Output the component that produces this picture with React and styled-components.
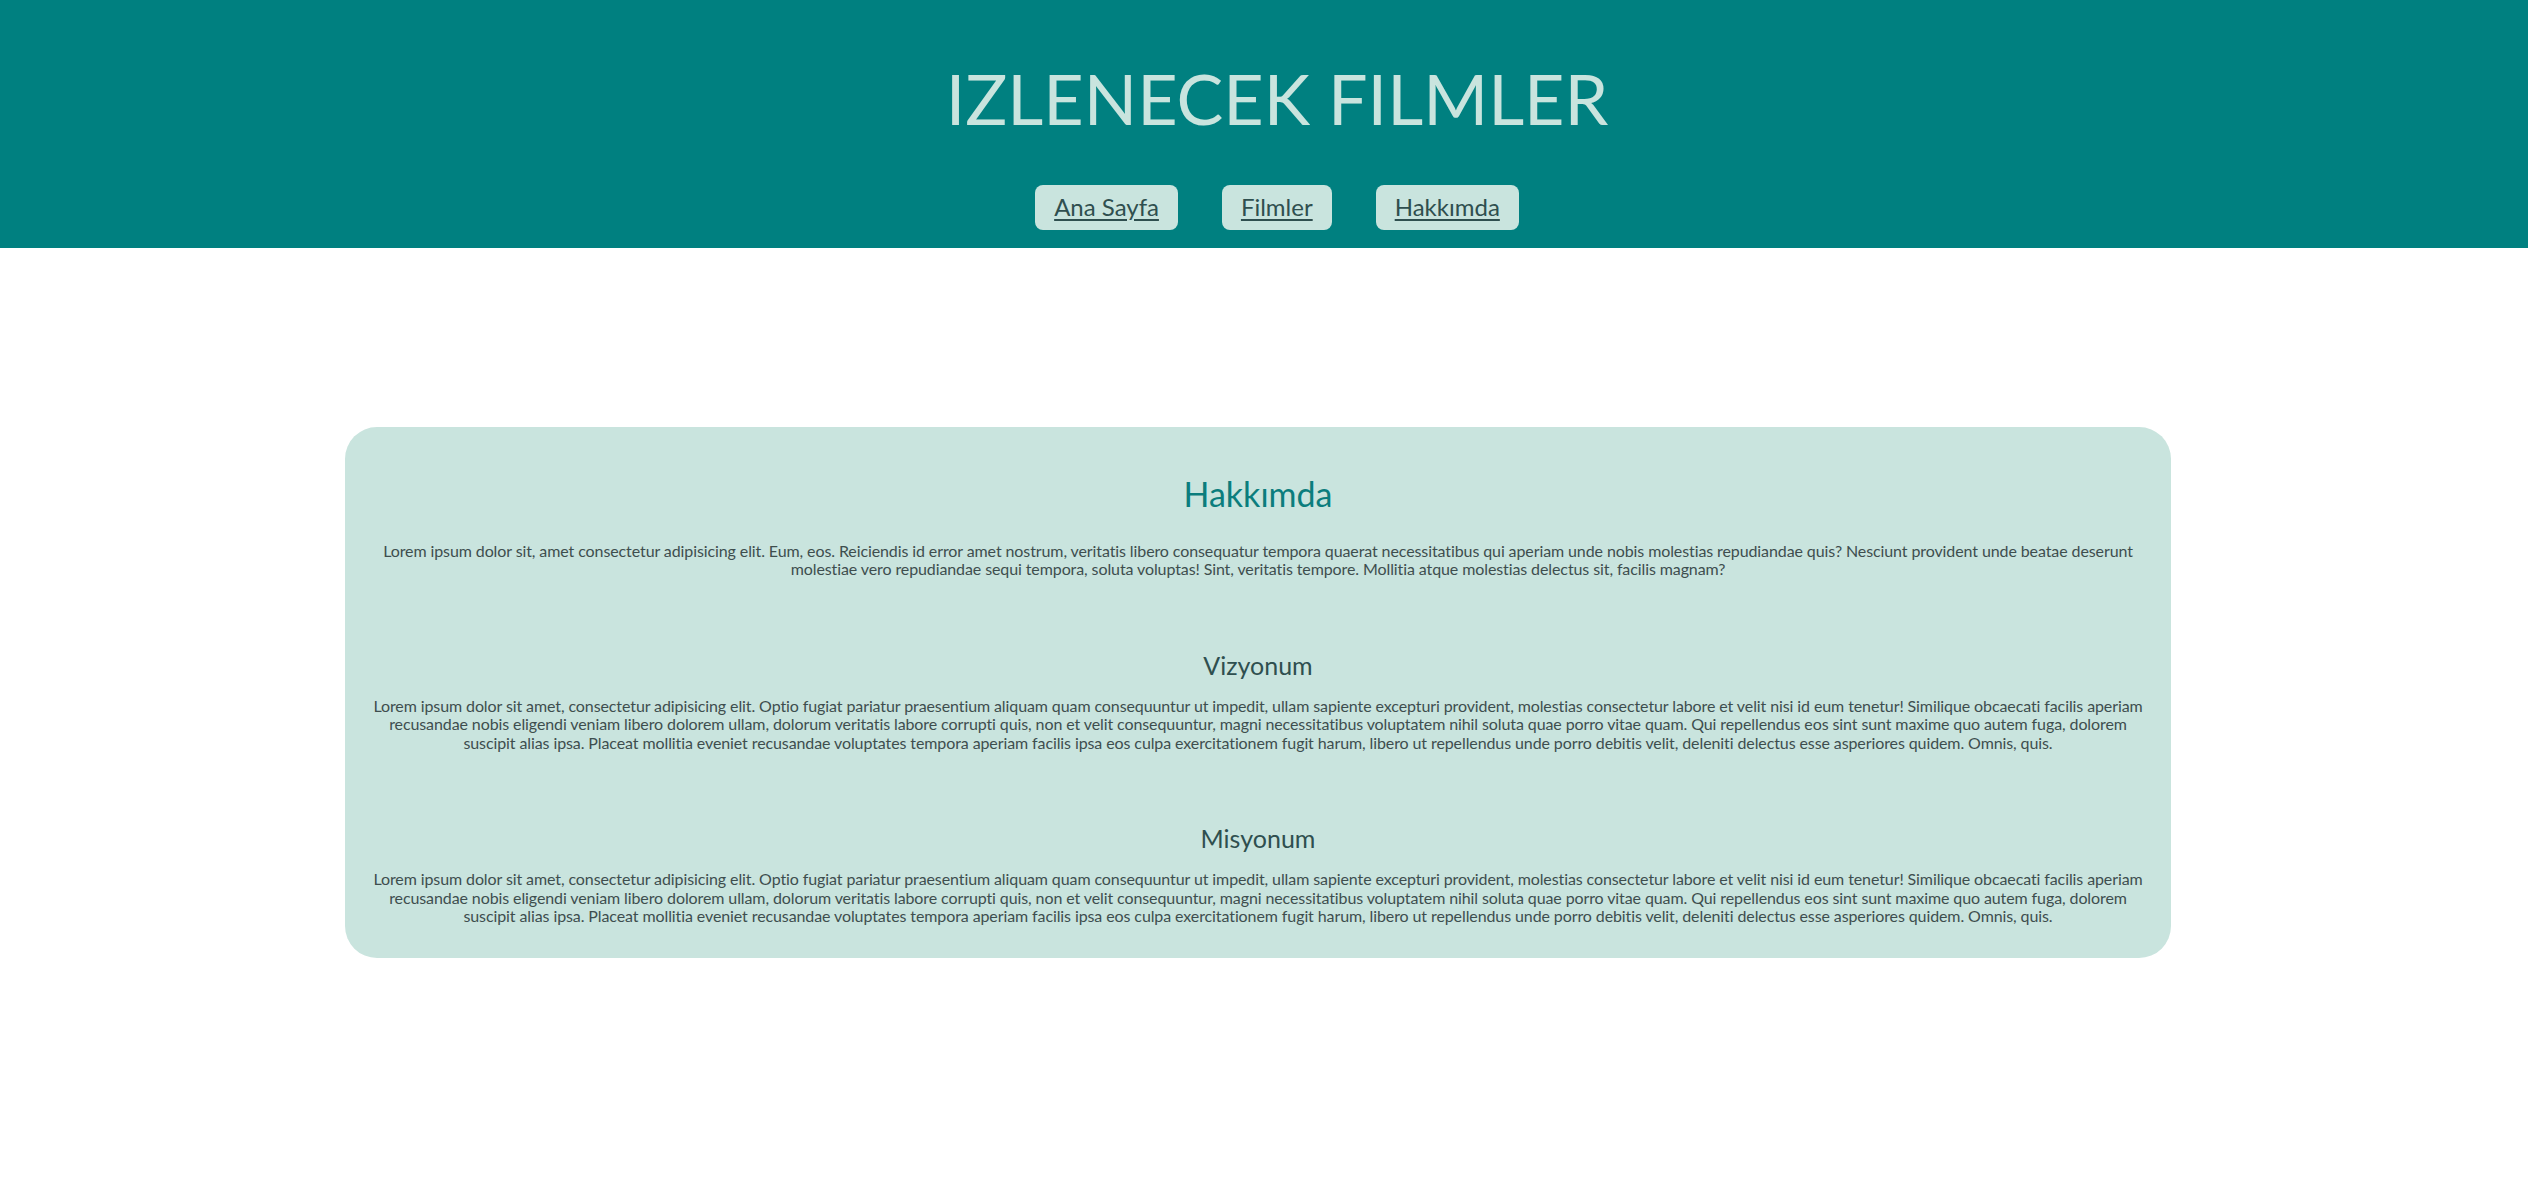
import React from 'react'
import styled, { createGlobalStyle } from 'styled-components'

const GlobalStyle = createGlobalStyle`
  body {
    margin: 0;
    background: #ffffff;
    font-family: Lato, "Noto Sans", sans-serif;
  }
`

const Header = styled.header`
  background: #008080;
  padding: 56px 0 18px 26px;
  display: flex;
  flex-direction: column;
  align-items: center;
`

const Title = styled.h1`
  margin: 0;
  font-size: 70px;
  font-weight: 400;
  line-height: 1.2;
  color: #c9e4de;
`

const Nav = styled.nav`
  display: flex;
  gap: 44px;
  margin-top: 45px;
`

const NavLink = styled.a`
  display: block;
  background: #c9e4de;
  color: #2f4f4f;
  font-size: 24px;
  line-height: 29px;
  padding: 7px 19px 9px;
  border-radius: 8px;
  text-decoration: underline;
  text-underline-offset: 3px;
  cursor: pointer;
`

const Main = styled.main`
  padding: 179px 357px 120px 345px;
`

const Card = styled.section`
  background: #c9e4de;
  border-radius: 32px;
  padding: 47px 18px 32px;
  text-align: center;
`

const PageTitle = styled.h2`
  margin: 0;
  font-size: 34px;
  font-weight: 400;
  line-height: 1.2;
  color: #0b7d7d;
`

const SubTitle = styled.h3`
  margin: 71px 0 0;
  font-size: 25px;
  font-weight: 400;
  line-height: 30px;
  color: #2f4f4f;
`

const Text = styled.p`
  margin: ${(p) => (p.$lead ? '27px' : '17px')} 0 0;
  font-size: 16px;
  line-height: 18.5px;
  letter-spacing: -0.1px;
  color: #3e4e4e;
`

const loremLong =
  'Lorem ipsum dolor sit amet, consectetur adipisicing elit. Optio fugiat pariatur praesentium aliquam quam consequuntur ut impedit, ullam sapiente excepturi provident, molestias consectetur labore et velit nisi id eum tenetur! Similique obcaecati facilis aperiam recusandae nobis eligendi veniam libero dolorem ullam, dolorum veritatis labore corrupti quis, non et velit consequuntur, magni necessitatibus voluptatem nihil soluta quae porro vitae quam. Qui repellendus eos sint sunt maxime quo autem fuga, dolorem suscipit alias ipsa. Placeat mollitia eveniet recusandae voluptates tempora aperiam facilis ipsa eos culpa exercitationem fugit harum, libero ut repellendus unde porro debitis velit, deleniti delectus esse asperiores quidem. Omnis, quis.'

const sections = [
  { title: 'Vizyonum', text: loremLong },
  { title: 'Misyonum', text: loremLong },
]

export default function App() {
  return (
    <>
      <GlobalStyle />
      <Header>
        <Title>IZLENECEK FILMLER</Title>
        <Nav>
          <NavLink>Ana Sayfa</NavLink>
          <NavLink>Filmler</NavLink>
          <NavLink>Hakkımda</NavLink>
        </Nav>
      </Header>
      <Main>
        <Card>
          <PageTitle>Hakkımda</PageTitle>
          <Text $lead>
            Lorem ipsum dolor sit, amet consectetur adipisicing elit. Eum, eos.
            Reiciendis id error amet nostrum, veritatis libero consequatur
            tempora quaerat necessitatibus qui aperiam unde nobis molestias
            repudiandae quis? Nesciunt provident unde beatae deserunt molestiae
            vero repudiandae sequi tempora, soluta voluptas! Sint, veritatis
            tempore. Mollitia atque molestias delectus sit, facilis magnam?
          </Text>
          {sections.map((s) => (
            <React.Fragment key={s.title}>
              <SubTitle>{s.title}</SubTitle>
              <Text>{s.text}</Text>
            </React.Fragment>
          ))}
        </Card>
      </Main>
    </>
  )
}
